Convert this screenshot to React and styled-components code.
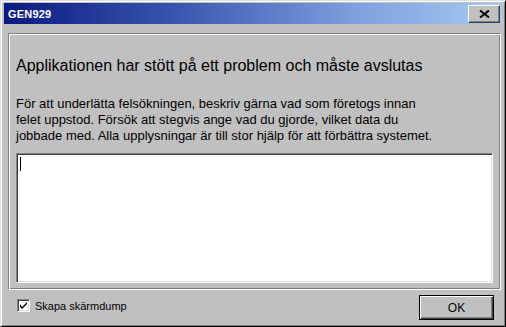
import React, { useState } from "react";
import styled, { createGlobalStyle } from "styled-components";

const GlobalStyle = createGlobalStyle`
  html, body {
    margin: 0;
    padding: 0;
    background: #c0c0c0;
  }
  body {
    font-family: "Liberation Sans", Arial, sans-serif;
  }
`;

const Window = styled.div`
  box-sizing: border-box;
  width: 506px;
  height: 327px;
  display: flex;
  flex-direction: column;
  background: #c0c0c0;
  border-top: 1px solid #dfdfdf;
  border-left: 1px solid #dfdfdf;
  border-right: 1px solid #000;
  border-bottom: 1px solid #000;
  box-shadow: inset 1px 1px 0 #fff, inset -1px -1px 0 #808080;
  padding: 2px 3px 3px 2px;
`;

const TitleBar = styled.div`
  height: 21px;
  display: flex;
  align-items: center;
  justify-content: space-between;
  padding: 0 2px 0 2px;
  background: linear-gradient(to right, #0a1a80 0%, #3a56b0 35%, #7e9ede 70%, #a6caf0 100%);
  margin-left: 1px;
`;

const Title = styled.span`
  color: #fff;
  font-weight: bold;
  font-size: 11px;
  letter-spacing: 0.2px;
  padding-left: 2px;
`;

const CloseButton = styled.button`
  box-sizing: border-box;
  width: 32px;
  height: 18px;
  padding: 0;
  display: flex;
  align-items: center;
  justify-content: center;
  background: #c0c0c0;
  border-top: 1px solid #fff;
  border-left: 1px solid #fff;
  border-right: 1px solid #404040;
  border-bottom: 1px solid #404040;
  box-shadow: inset -1px -1px 0 #808080;
`;

const Body = styled.div`
  flex: 1;
  display: flex;
  flex-direction: column;
  padding: 9px 1px 0 5px;
`;

const GroupBox = styled.div`
  box-sizing: border-box;
  height: 257px;
  display: flex;
  flex-direction: column;
  border-top: 1px solid #808080;
  border-left: 1px solid #808080;
  border-right: 1px solid #fff;
  border-bottom: 1px solid #fff;
  box-shadow: inset 1px 1px 0 #fff, inset -1px -1px 0 #808080;
  padding: 22px 7px 6px 7px;
`;

const Heading = styled.div`
  font-size: 16px;
  color: #000;
  line-height: 20px;
  margin-bottom: 20px;
`;

const Para = styled.div`
  font-size: 13px;
  color: #000;
  line-height: 16px;
  margin-bottom: 9px;
`;

const TextFrame = styled.div`
  box-sizing: border-box;
  flex: 1;
  background: #fff;
  border-top: 1px solid #808080;
  border-left: 1px solid #808080;
  border-right: 1px solid #fff;
  border-bottom: 1px solid #fff;
  box-shadow: inset 1px 1px 0 #404040, inset -1px -1px 0 #dfdfdf;
  padding: 3px 3px;
`;

const Caret = styled.span`
  display: block;
  width: 1px;
  height: 14px;
  background: #000;
`;

const Footer = styled.div`
  display: flex;
  align-items: center;
  justify-content: space-between;
  padding: 5px 7px 0 9px;
`;

const CheckLabel = styled.label`
  display: flex;
  align-items: center;
  gap: 5px;
  font-size: 11px;
  color: #000;
  cursor: default;
  margin-top: -4px;
`;

const CheckBox = styled.span`
  box-sizing: border-box;
  width: 13px;
  height: 13px;
  background: #fff;
  display: flex;
  align-items: center;
  justify-content: center;
  border-top: 1px solid #808080;
  border-left: 1px solid #808080;
  border-right: 1px solid #fff;
  border-bottom: 1px solid #fff;
  box-shadow: inset 1px 1px 0 #404040, inset -1px -1px 0 #dfdfdf;
`;

const OkButton = styled.button`
  box-sizing: border-box;
  width: 75px;
  height: 25px;
  background: #c0c0c0;
  font-family: "Liberation Sans", Arial, sans-serif;
  font-size: 12px;
  color: #000;
  border: 1px solid #000;
  box-shadow: inset 1px 1px 0 #fff, inset -1px -1px 0 #404040, inset -2px -2px 0 #808080;
  padding: 0;
`;

export default function App() {
  const [checked, setChecked] = useState(true);

  return (
    <>
      <GlobalStyle />
      <Window>
        <TitleBar>
          <Title>GEN929</Title>
          <CloseButton aria-label="Stäng">
            <svg width="11" height="8" viewBox="0 0 11 8">
              <path d="M1 0.5L10 7.5M10 0.5L1 7.5" stroke="#000" strokeWidth="2" />
            </svg>
          </CloseButton>
        </TitleBar>
        <Body>
          <GroupBox>
            <Heading>Applikationen har stött på ett problem och måste avslutas</Heading>
            <Para>
              För att underlätta felsökningen, beskriv gärna vad som företogs innan
              <br />
              felet uppstod. Försök att stegvis ange vad du gjorde, vilket data du
              <br />
              jobbade med. Alla upplysningar är till stor hjälp för att förbättra systemet.
            </Para>
            <TextFrame>
              <Caret />
            </TextFrame>
          </GroupBox>
          <Footer>
            <CheckLabel onClick={() => setChecked((c) => !c)}>
              <CheckBox>
                {checked && (
                  <svg width="7" height="7" viewBox="0 0 7 7">
                    <path d="M0 2v3l2 2 5-5V0L2 5z" fill="#000" />
                  </svg>
                )}
              </CheckBox>
              Skapa skärmdump
            </CheckLabel>
            <OkButton>OK</OkButton>
          </Footer>
        </Body>
      </Window>
    </>
  );
}
